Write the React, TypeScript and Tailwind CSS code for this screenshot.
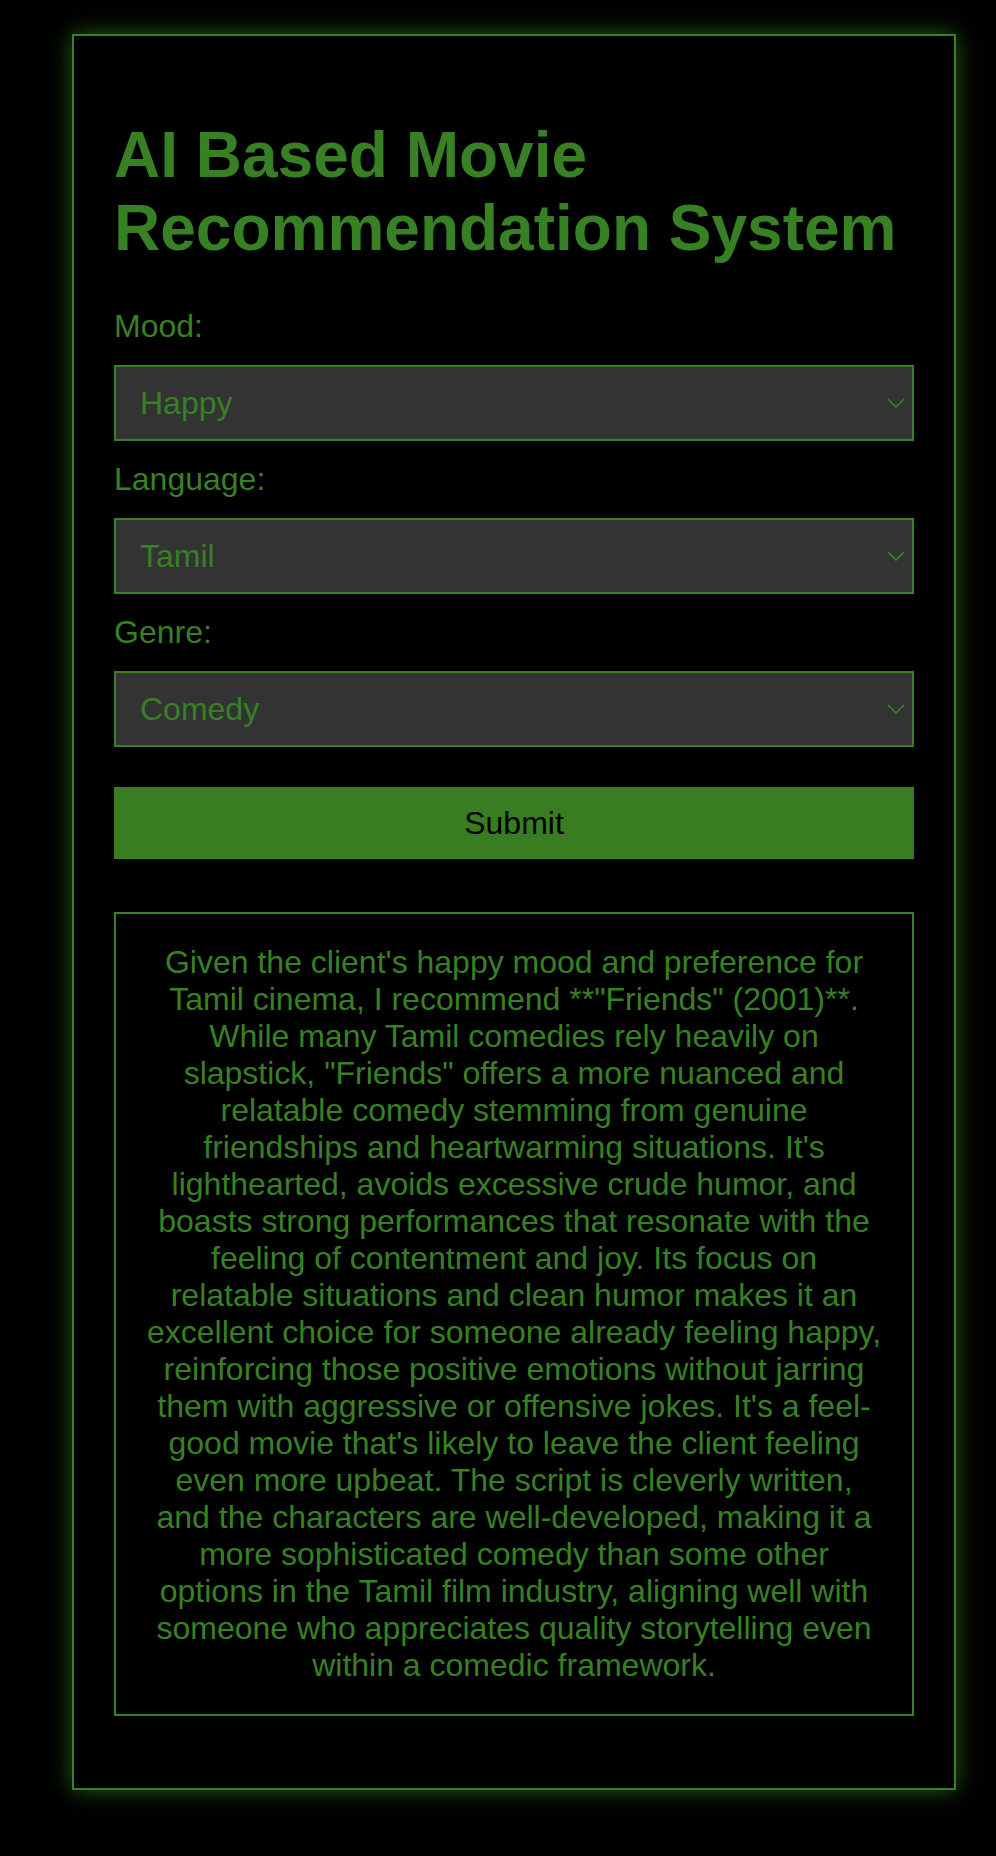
import React from "react";

const text =
  `Given the client's happy mood and preference for Tamil cinema, I recommend **"Friends" (2001)**. While many Tamil comedies rely heavily on slapstick, "Friends" offers a more nuanced and relatable comedy stemming from genuine friendships and heartwarming situations. It's lighthearted, avoids excessive crude humor, and boasts strong performances that resonate with the feeling of contentment and joy. Its focus on relatable situations and clean humor makes it an excellent choice for someone already feeling happy, reinforcing those positive emotions without jarring them with aggressive or offensive jokes. It's a feel-good movie that's likely to leave the client feeling even more upbeat. The script is cleverly written, and the characters are well-developed, making it a more sophisticated comedy than some other options in the Tamil film industry, aligning well with someone who appreciates quality storytelling even within a comedic framework.`;

function Field({ label, value }: { label: string; value: string }) {
  return (
    <>
      <label className="block leading-[37px]">{label}</label>
      <div className="relative">
        <select
          defaultValue={value}
          className="block w-full h-[76px] appearance-none bg-[#333333] border-2 border-[#388024] text-[#388024] text-[32px] pl-6 outline-none rounded-none"
          style={{ fontFamily: '"Liberation Sans", Arial, sans-serif' }}
        >
          <option>{value}</option>
        </select>
        <svg
          className="absolute right-[9px] top-1/2 -translate-y-1/2 pointer-events-none"
          width="18"
          height="11"
          viewBox="0 0 18 11"
        >
          <path d="M1 1.5 L9 9.5 L17 1.5" fill="none" stroke="#388024" strokeWidth="1.7" />
        </svg>
      </div>
    </>
  );
}

export default function App() {
  return (
    <div
      className="min-h-screen bg-black pt-[34px] pb-[66px] pl-[72px] text-[#388024] text-[32px]"
      style={{ fontFamily: '"Liberation Sans", Arial, Helvetica, sans-serif' }}
    >
      <div className="w-[884px] border-2 border-[#388024] bg-black px-10 pt-10 pb-10 shadow-[0_0_22px_rgba(56,128,36,0.7)]">
        <h1 className="text-[64px] font-bold leading-[73px] mt-[43px] mb-[43px]">
          AI Based Movie Recommendation System
        </h1>
        <div className="flex flex-col gap-5">
          <Field label="Mood:" value="Happy" />
          <Field label="Language:" value="Tamil" />
          <Field label="Genre:" value="Comedy" />
        </div>
        <button className="mt-10 block w-full h-[72px] bg-[#387d22] text-black text-[32px] leading-[37px]">
          Submit
        </button>
        <div className="mt-[53px] mb-[32px] border-2 border-[#388024] p-[30px] text-center leading-[37px]">
          {text}
        </div>
      </div>
    </div>
  );
}
